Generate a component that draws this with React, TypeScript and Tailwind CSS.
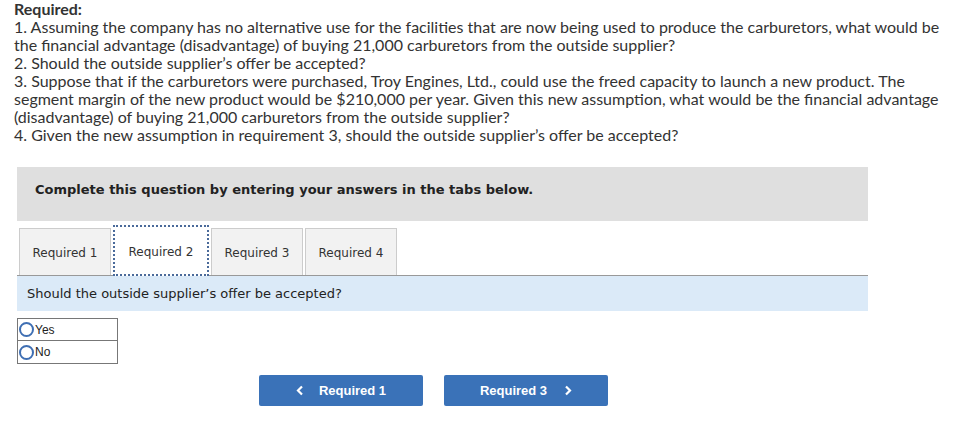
import React from 'react';

const lines = [
    '1. Assuming the company has no alternative use for the facilities that are now being used to produce the carburetors, what would be',
    'the financial advantage (disadvantage) of buying 21,000 carburetors from the outside supplier?',
    '2. Should the outside supplier’s offer be accepted?',
    '3. Suppose that if the carburetors were purchased, Troy Engines, Ltd., could use the freed capacity to launch a new product. The',
    'segment margin of the new product would be $210,000 per year. Given this new assumption, what would be the financial advantage',
    '(disadvantage) of buying 21,000 carburetors from the outside supplier?',
    '4. Given the new assumption in requirement 3, should the outside supplier’s offer be accepted?',
];

const tabs = ['Required 1', 'Required 2', 'Required 3', 'Required 4'];

const Chevron: React.FC<{ dir: 'left' | 'right' }> = ({ dir }) => (
    <svg width="8" height="11" viewBox="0 0 8 11" className="shrink-0">
        <path
            d={dir === 'left' ? 'M6 1.5 L2 5.5 L6 9.5' : 'M2 1.5 L6 5.5 L2 9.5'}
            fill="none"
            stroke="white"
            strokeWidth="2.2"
        />
    </svg>
);

const App: React.FC = () => {
    return (
        <div className="w-[978px] h-[428px] bg-white overflow-hidden">
            <div className="px-[14px] text-[16px] leading-[18px] text-[#333] font-['Lato',sans-serif] whitespace-nowrap">
                <div className="font-bold">Required:</div>
                {lines.map(l => (
                    <div key={l}>{l}</div>
                ))}
            </div>

            <div className="ml-[17px] mt-[23px] w-[851px] h-[54px] bg-[#dfdfdf] pt-[13px] pl-[18px] font-['DejaVu_Sans',sans-serif] font-bold text-[13px] text-[#222]">
                Complete this question by entering your answers in the tabs below.
            </div>

            <div className="ml-[17px] mt-[7px] w-[851px] flex items-end gap-[2px] pl-[2px] border-b border-[#999] h-[48px] font-['DejaVu_Sans',sans-serif] text-[12px] text-[#333]">
                {tabs.map((t, i) =>
                    i === 1 ? (
                        <div
                            key={t}
                            className="h-[51px] -mb-px w-[96px] bg-white border-2 border-dotted border-[#4a6a9a] flex items-center justify-center pt-[2px]"
                        >
                            {t}
                        </div>
                    ) : (
                        <div
                            key={t}
                            className="h-[47px] w-[92px] bg-[#f2f2f2] border border-b-0 border-[#ccc] flex items-center justify-center pt-[2px]"
                        >
                            {t}
                        </div>
                    )
                )}
            </div>

            <div className="ml-[17px] w-[851px] h-[35px] bg-[#dbeaf8] flex items-center pl-[10px] font-['DejaVu_Sans',sans-serif] text-[13px] text-[#222]">
                Should the outside supplier’s offer be accepted?
            </div>

            <div className="ml-[17px] mt-[7px] w-[101px] border border-[#777] font-['Liberation_Sans',sans-serif] text-[12px] text-[#222]">
                {['Yes', 'No'].map((o, i) => (
                    <div key={o} className={`h-[22px] flex items-center pl-[1px] ${i === 0 ? 'border-b border-[#777]' : ''}`}>
                        <span className="w-[15px] h-[15px] rounded-full border-2 border-[#3f6fb3] mr-[1px]" />
                        {o}
                    </div>
                ))}
            </div>

            <div className="mt-[11px] pl-[259px] flex gap-[21px] font-['Liberation_Sans',sans-serif] font-bold text-[13px] text-white">
                <button className="w-[164px] h-[31px] rounded-[2px] bg-[#3a72b8] flex items-center justify-center gap-[15px]">
                    <Chevron dir="left" />
                    Required 1
                </button>
                <button className="w-[164px] h-[31px] rounded-[2px] bg-[#3a72b8] flex items-center justify-center gap-[17px]">
                    Required 3
                    <Chevron dir="right" />
                </button>
            </div>
        </div>
    );
};

export default App;
